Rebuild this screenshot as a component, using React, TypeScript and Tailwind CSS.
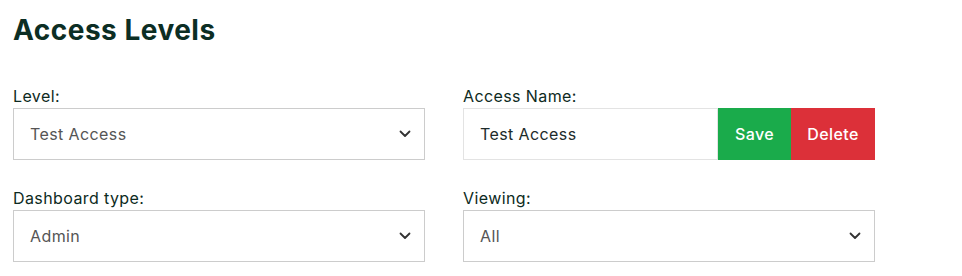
import React from 'react';

const Chevron: React.FC = () => (
  <svg width="12" height="8" viewBox="0 0 12 8" fill="none" className="shrink-0">
    <path d="M1.5 1.5L6 6L10.5 1.5" stroke="#333" strokeWidth="1.8" strokeLinecap="round" strokeLinejoin="round" />
  </svg>
);

const SelectBox: React.FC<{ value: string }> = ({ value }) => (
  <div className="h-[52px] w-full border border-[#cccccc] bg-white flex items-center justify-between pl-4 pr-[13px]">
    <span className="text-[16px] text-[#555555]">{value}</span>
    <Chevron />
  </div>
);

const Field: React.FC<{ label: string; children: React.ReactNode }> = ({ label, children }) => (
  <div className="flex flex-col">
    <label className="text-[16px] leading-[24px] text-[#0d2a22]">{label}</label>
    {children}
  </div>
);

const App: React.FC = () => {
  return (
    <div
      className="min-h-screen bg-white px-[13px] pt-[8px] tracking-[0.4px]"
      style={{ fontFamily: 'Inter, "Open Sans", sans-serif' }}
    >
      <h1 className="text-[28px] leading-[44px] font-bold tracking-[0.5px] text-[#0c2e24] mb-[32px]">Access Levels</h1>

      <div className="grid grid-cols-[412px_412px] gap-x-[38px] gap-y-[26px]">
        <Field label="Level:">
          <SelectBox value="Test Access" />
        </Field>

        <Field label="Access Name:">
          <div className="flex h-[52px]">
            <div className="flex-1 border border-[#e3e3e3] flex items-center pl-4">
              <span className="text-[16px] text-[#1d2b2b]">Test Access</span>
            </div>
            <button className="w-[73px] bg-[#1aab4b] text-white text-[16px] font-medium">Save</button>
            <button className="w-[84px] bg-[#dc3039] text-white text-[16px] font-medium">Delete</button>
          </div>
        </Field>

        <Field label="Dashboard type:">
          <SelectBox value="Admin" />
        </Field>

        <Field label="Viewing:">
          <SelectBox value="All" />
        </Field>
      </div>
    </div>
  );
};

export default App;
